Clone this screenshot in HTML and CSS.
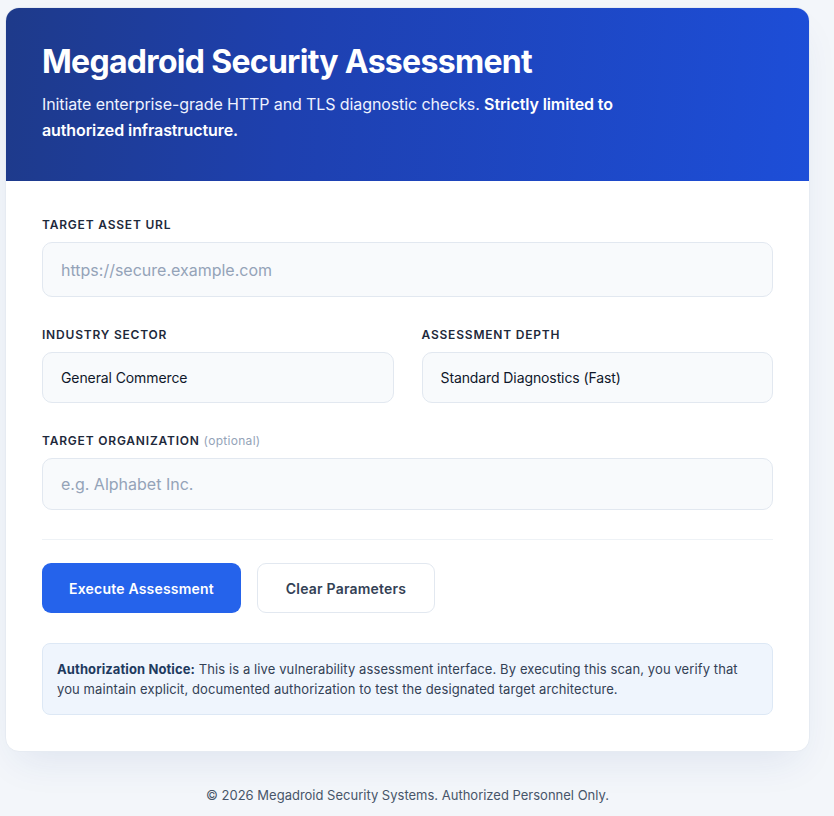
FILE: index.html
```html
<!DOCTYPE html>
<html lang="en">
<head>
<meta charset="utf-8">
<title>Megadroid Security Assessment</title>
<link rel="stylesheet" href="styles.css">
</head>
<body>
<main class="page">
  <section class="card">
    <header class="hero">
      <h1 class="hero-title">Megadroid Security Assessment</h1>
      <p class="hero-sub">Initiate enterprise-grade HTTP and TLS diagnostic checks. <strong>Strictly limited to authorized infrastructure.</strong></p>
    </header>
    <form class="form">
      <div class="field">
        <label class="label" for="url">TARGET ASSET URL</label>
        <input class="input" id="url" type="text" placeholder="https://secure.example.com">
      </div>
      <div class="row">
        <div class="field">
          <label class="label" for="sector">INDUSTRY SECTOR</label>
          <div class="select">General Commerce</div>
        </div>
        <div class="field">
          <label class="label" for="depth">ASSESSMENT DEPTH</label>
          <div class="select">Standard Diagnostics (Fast)</div>
        </div>
      </div>
      <div class="field field-last">
        <label class="label" for="org">TARGET ORGANIZATION <span class="optional">(optional)</span></label>
        <input class="input input-org" id="org" type="text" placeholder="e.g. Alphabet Inc.">
      </div>
      <hr class="divider">
      <div class="actions">
        <button type="button" class="btn btn-primary">Execute Assessment</button>
        <button type="button" class="btn btn-secondary">Clear Parameters</button>
      </div>
      <div class="notice">
        <strong>Authorization Notice:</strong> This is a live vulnerability assessment interface. By executing this scan, you verify that you maintain explicit, documented authorization to test the designated target architecture.
      </div>
    </form>
  </section>
  <footer class="footer">© 2026 Megadroid Security Systems. Authorized Personnel Only.</footer>
</main>
</body>
</html>
```
FILE: styles.css
```css
* { box-sizing: border-box; }
html, body { margin: 0; padding: 0; }
body {
  background: #f3f6fa;
  font-family: Inter, "Noto Sans", sans-serif;
  color: #0f172a;
}
.page {
  width: 805px;
  margin: 7px 0 0 5px;
}
.card {
  background: #ffffff;
  border: 1px solid #e6ebf2;
  border-radius: 14px;
  overflow: hidden;
  box-shadow: 0 18px 40px -12px rgba(30, 58, 138, 0.10);
}
.hero {
  background: linear-gradient(95deg, #1e3a8a 0%, #1e40af 35%, #1d4ed8 100%);
  color: #ffffff;
  padding: 36px 36px 36px;
  height: 173px;
}
.hero-title {
  margin: 0;
  font-size: 32px;
  font-weight: 700;
  letter-spacing: -0.7px;
  line-height: 36px;
}
.hero-sub {
  margin: 11px 0 0;
  max-width: 610px;
  font-size: 16px;
  letter-spacing: -0.1px;
  line-height: 26px;
  color: #eef2ff;
}
.hero-sub strong { color: #ffffff; font-weight: 600; }
.form {
  padding: 36px 36px 36px;
  display: flex;
  flex-direction: column;
}
.field {
  display: flex;
  flex-direction: column;
  margin-bottom: 30px;
}
.field-last { margin-bottom: 29px; }
.row {
  display: grid;
  grid-template-columns: 1fr 1fr;
  gap: 28px;
}
.label {
  font-size: 12px;
  font-weight: 600;
  letter-spacing: 0.8px;
  color: #1e293b;
  line-height: 16px;
  margin-bottom: 9px;
}
.optional {
  font-weight: 400;
  letter-spacing: 0.3px;
  color: #94a3b8;
}
.input, .select {
  font-family: Inter, "Noto Sans", sans-serif;
  font-size: 16px;
  background: #f8fafc;
  border: 1px solid #e2e8f0;
  border-radius: 10px;
  color: #0f172a;
  padding: 0 18px;
  outline: none;
}
.input { height: 55px; }
.input-org { height: 52px; }
.input::placeholder { color: #94a3b8; }
.select {
  height: 51px;
  display: flex;
  align-items: center;
  font-size: 14px;
  letter-spacing: -0.1px;
}
.divider {
  border: 0;
  border-top: 1px solid #eef2f6;
  margin: 0 0 23px;
}
.actions {
  display: flex;
  gap: 16px;
  margin-bottom: 30px;
}
.btn {
  font-family: Inter, "Noto Sans", sans-serif;
  font-size: 14px;
  font-weight: 600;
  letter-spacing: 0.2px;
  height: 50px;
  border-radius: 9px;
  cursor: pointer;
}
.btn-primary {
  width: 199px;
  background: #2563eb;
  color: #ffffff;
  border: 0;
}
.btn-secondary {
  width: 178px;
  background: #ffffff;
  color: #334155;
  border: 1px solid #e2e8f0;
}
.notice {
  background: #eff5fd;
  border: 1px solid #dde8f5;
  border-radius: 8px;
  padding: 15px 14px 15px;
  font-size: 13px;
  letter-spacing: 0.1px;
  line-height: 20px;
  color: #334155;
}
.notice strong { color: #1e3a5f; font-weight: 700; }
.footer {
  text-align: center;
  font-size: 13px;
  color: #475569;
  padding: 35px 0 0;
}
```
